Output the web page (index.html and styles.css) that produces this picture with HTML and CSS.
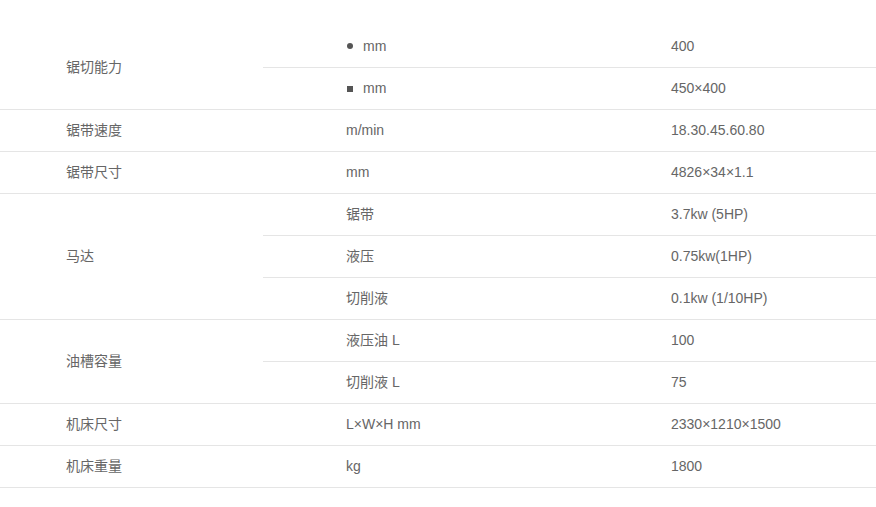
FILE: index.html
```html
<!DOCTYPE html>
<html lang="zh">
<head>
<meta charset="utf-8">
<link rel="stylesheet" href="styles.css">
</head>
<body>
<table class="spec">
  <tbody>
    <tr>
      <td class="c1" rowspan="2">锯切能力</td>
      <td class="c2"><span class="dot"></span>mm</td>
      <td class="c3">400</td>
    </tr>
    <tr>
      <td class="c2"><span class="sq"></span>mm</td>
      <td class="c3">450×400</td>
    </tr>
    <tr>
      <td class="c1">锯带速度</td>
      <td class="c2">m/min</td>
      <td class="c3">18.30.45.60.80</td>
    </tr>
    <tr>
      <td class="c1">锯带尺寸</td>
      <td class="c2">mm</td>
      <td class="c3">4826×34×1.1</td>
    </tr>
    <tr>
      <td class="c1" rowspan="3">马达</td>
      <td class="c2">锯带</td>
      <td class="c3">3.7kw (5HP)</td>
    </tr>
    <tr>
      <td class="c2">液压</td>
      <td class="c3">0.75kw(1HP)</td>
    </tr>
    <tr>
      <td class="c2">切削液</td>
      <td class="c3">0.1kw (1/10HP)</td>
    </tr>
    <tr>
      <td class="c1" rowspan="2">油槽容量</td>
      <td class="c2">液压油 L</td>
      <td class="c3">100</td>
    </tr>
    <tr>
      <td class="c2">切削液 L</td>
      <td class="c3">75</td>
    </tr>
    <tr>
      <td class="c1">机床尺寸</td>
      <td class="c2">L×W×H mm</td>
      <td class="c3">2330×1210×1500</td>
    </tr>
    <tr>
      <td class="c1">机床重量</td>
      <td class="c2">kg</td>
      <td class="c3">1800</td>
    </tr>
  </tbody>
</table>
</body>
</html>
```

FILE: styles.css
```css
html, body {
  margin: 0;
  padding: 0;
  background: #fff;
}
body {
  font-family: "Liberation Sans", Arial, "Noto Sans CJK SC", sans-serif;
  font-size: 14px;
  color: #666;
}
.spec {
  margin-top: 26px;
  width: 876px;
  border-collapse: collapse;
  table-layout: fixed;
}
.spec td {
  height: 39px;
  padding: 0 0 2px 0;
  border-bottom: 1px solid #e5e5e5;
  vertical-align: middle;
  text-align: left;
  white-space: nowrap;
  line-height: 20px;
}
.spec .c1 {
  width: 197px;
  padding-left: 66px;
}
.spec .c2 {
  width: 242px;
  padding-left: 83px;
}
.spec .c3 {
  padding-left: 83px;
}
.dot {
  display: inline-block;
  width: 6px;
  height: 6px;
  border-radius: 50%;
  background: #555;
  margin: 0 10px 1px 1px;
  vertical-align: middle;
}
.sq {
  display: inline-block;
  width: 6px;
  height: 6px;
  background: #555;
  margin: 0 10px 0 1px;
  vertical-align: middle;
}
```
